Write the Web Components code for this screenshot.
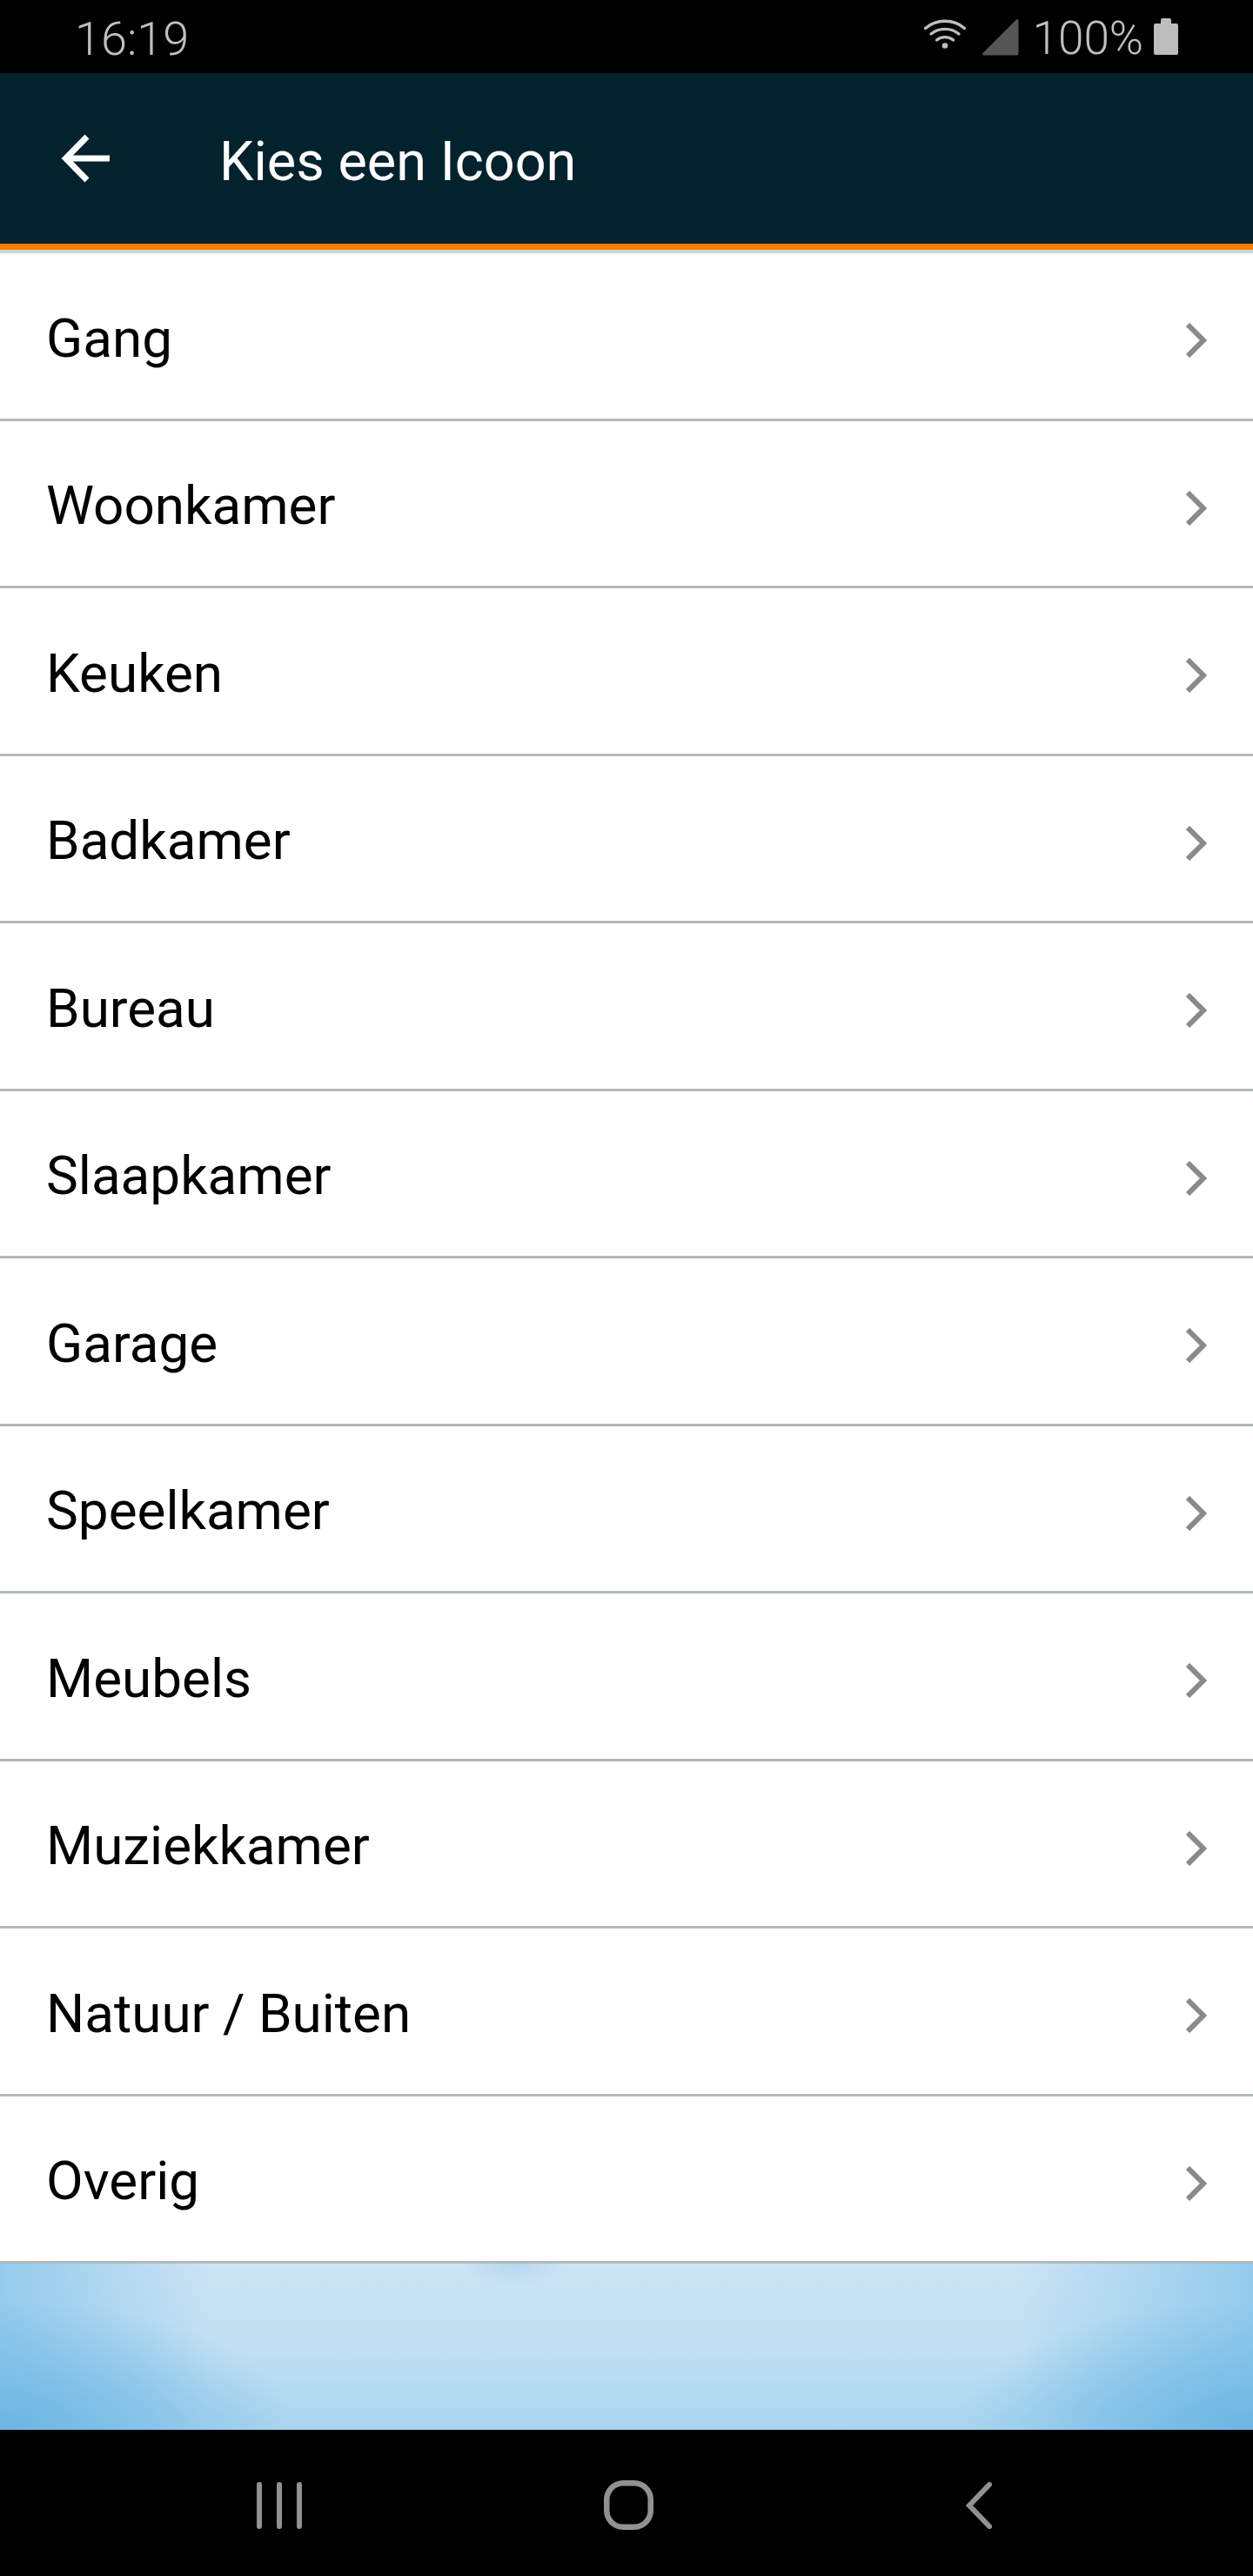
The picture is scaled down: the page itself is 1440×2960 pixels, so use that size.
<!DOCTYPE html>
<html lang="nl">
<head>
<meta charset="utf-8">
<title>Kies een Icoon</title>
<style>
  html, body { margin: 0; padding: 0; background: #000; }
  body { width: 1440px; height: 2960px; overflow: hidden; font-family: Roboto, "Liberation Sans", sans-serif; }
</style>
</head>
<body>
<app-screen>
  <status-bar slot="status" time="16:19" battery="100%"></status-bar>
  <tool-bar slot="toolbar">Kies een Icoon</tool-bar>
  <icon-list slot="list">
    <list-row>Gang</list-row>
    <list-row>Woonkamer</list-row>
    <list-row>Keuken</list-row>
    <list-row>Badkamer</list-row>
    <list-row>Bureau</list-row>
    <list-row>Slaapkamer</list-row>
    <list-row>Garage</list-row>
    <list-row>Speelkamer</list-row>
    <list-row>Meubels</list-row>
    <list-row>Muziekkamer</list-row>
    <list-row>Natuur / Buiten</list-row>
    <list-row>Overig</list-row>
  </icon-list>
  <sky-backdrop slot="backdrop"></sky-backdrop>
  <nav-bar slot="nav"></nav-bar>
</app-screen>

<script>
class AppScreen extends HTMLElement {
  constructor() {
    super();
    this.attachShadow({ mode: "open" });
  }

  connectedCallback() {
    this.shadowRoot.innerHTML = `
      <style>
        :host { display: flex; flex-direction: column; width: 1440px; height: 2960px; }
      </style>
      <slot name="status"></slot>
      <slot name="toolbar"></slot>
      <slot name="list"></slot>
      <slot name="backdrop"></slot>
      <slot name="nav"></slot>
    `;
  }
}
customElements.define("app-screen", AppScreen);

class StatusBar extends HTMLElement {
  constructor() {
    super();
    this.attachShadow({ mode: "open" });
  }

  connectedCallback() {
    this.shadowRoot.innerHTML = `
      <style>
        :host {
          display: flex; align-items: center; box-sizing: border-box;
          height: 84px; padding: 0 86px 0 86px;
          background: #000; color: #c0c0c0;
          font: 300 53px Roboto, sans-serif;
        }
        .time { flex: 1; font-size: 54px; position: relative; top: 2px; }
        .pct { margin: 0 12px 0 16px; position: relative; top: 2px; }
        svg { display: block; }
        .wifi { margin-right: 18px; position: relative; top: -3px; }
      </style>
      <span class="time">${this.getAttribute("time")}</span>
      <svg class="wifi" width="48" height="36" viewBox="0 0 48 36" fill="none" stroke="#bdbdbd" stroke-width="3.4" stroke-linecap="round">
        <path d="M1.500 11.500C14 .5 34 .5 46.500 11.500"/>
        <path d="M8 18C17 10.500 31 10.500 40 18"/>
        <path d="M14.500 25C20 20.500 28 20.500 33.500 25"/>
        <circle cx="24" cy="31.500" r="3.300" fill="#bdbdbd" stroke="none"/>
      </svg>
      <svg width="43" height="43" viewBox="0 0 43 43"><path d="M40 1.500Q42.500 0 42.500 3V40Q42.500 42.500 40 42.500H3Q-.5 42.500 1.500 40Z" fill="#555"/></svg>
      <span class="pct">${this.getAttribute("battery")}</span>
      <svg width="28" height="42" viewBox="0 0 28 42"><path d="M8 2Q8 0 10 0H18Q20 0 20 2V6H26Q28 6 28 8V40Q28 42 26 42H2Q0 42 0 40V8Q0 6 2 6H8Z" fill="#bdbdbd"/></svg>
    `;
  }
}
customElements.define("status-bar", StatusBar);

class ToolBar extends HTMLElement {
  constructor() {
    super();
    this.attachShadow({ mode: "open" });
  }

  connectedCallback() {
    this.shadowRoot.innerHTML = `
      <style>
        :host {
          display: flex; align-items: center; box-sizing: border-box;
          height: 203px; padding: 0 0 0 70px;
          background: #02222d; color: #fff;
          border-bottom: 7px solid #f57c00;
          box-shadow: 0 4px 0 #ccd3d9;
          position: relative; z-index: 1;
          font: 400 63px Roboto, sans-serif;
        }
        svg { display: block; margin-right: 126px; }
        .title { position: relative; top: 3px; }
      </style>
      <svg width="56" height="56" viewBox="0 0 56 56" fill="none" stroke="#fff" stroke-width="7">
        <path d="M56 28H6"/>
        <path d="M30 3L5.500 28L30 53"/>
      </svg>
      <span class="title"><slot></slot></span>
    `;
  }
}
customElements.define("tool-bar", ToolBar);

class IconList extends HTMLElement {
  constructor() {
    super();
    this.attachShadow({ mode: "open" });
  }

  connectedCallback() {
    this.shadowRoot.innerHTML = `
      <style>
        :host { display: block; margin-top: 4px; background: #fff; }
      </style>
      <slot></slot>
    `;
  }
}
customElements.define("icon-list", IconList);

class ListRow extends HTMLElement {
  constructor() {
    super();
    this.attachShadow({ mode: "open" });
  }

  connectedCallback() {
    this.shadowRoot.innerHTML = `
      <style>
        :host {
          display: flex; align-items: center; justify-content: space-between;
          box-sizing: border-box; height: 192.5px;
          padding: 5px 53px 0 53px;
          border-bottom: 3px solid #b1b9bd;
          color: #000; font: 400 62px Roboto, sans-serif;
        }
        svg { display: block; position: relative; top: 3px; }
      </style>
      <span><slot></slot></span>
      <svg width="24" height="40" viewBox="0 0 24 40" fill="none" stroke="#8a8a8a" stroke-width="6">
        <path d="M2 2L20 20L2 38"/>
      </svg>
    `;
  }
}
customElements.define("list-row", ListRow);

class SkyBackdrop extends HTMLElement {
  constructor() {
    super();
    this.attachShadow({ mode: "open" });
  }

  connectedCallback() {
    this.shadowRoot.innerHTML = `
      <style>
        :host {
          display: block; height: 191px;
          background:
            radial-gradient(60px 26px at 590px 0, rgba(165,208,234,.6), rgba(165,208,234,0)),
            radial-gradient(340px 150px at 0 100%, #6cb6e3, rgba(108,182,227,0)),
            radial-gradient(340px 150px at 100% 100%, #6cb6e3, rgba(108,182,227,0)),
            linear-gradient(90deg, #94cbec 0, rgba(148,203,236,0) 240px, rgba(148,203,236,0) 1170px, #94cbec 100%),
            linear-gradient(#cce4f4, #bfdff2 55%, #a9d5ef 100%);
        }
      </style>
    `;
  }
}
customElements.define("sky-backdrop", SkyBackdrop);

class NavBar extends HTMLElement {
  constructor() {
    super();
    this.attachShadow({ mode: "open" });
  }

  connectedCallback() {
    this.shadowRoot.innerHTML = `
      <style>
        :host {
          display: flex; align-items: center; box-sizing: border-box;
          height: 168px; padding: 5px 0 0 295px; background: #000;
        }
        svg { display: block; }
        .home { margin-left: 347px; }
        .back { margin-left: 359px; }
      </style>
      <svg width="52" height="54" viewBox="0 0 52 54" fill="none" stroke="#919191" stroke-width="6" stroke-linecap="round">
        <path d="M3 3V51M26 3V51M49 3V51"/>
      </svg>
      <svg class="home" width="57" height="57" viewBox="0 0 57 57" fill="none" stroke="#919191" stroke-width="6.500">
        <rect x="3.250" y="3.250" width="50.500" height="50.500" rx="19"/>
      </svg>
      <svg class="back" width="30" height="54" viewBox="0 0 30 54" fill="none" stroke="#919191" stroke-width="6" stroke-linecap="round">
        <path d="M27 3L4 27L27 51"/>
      </svg>
    `;
  }
}
customElements.define("nav-bar", NavBar);
</script>
</body>
</html>
